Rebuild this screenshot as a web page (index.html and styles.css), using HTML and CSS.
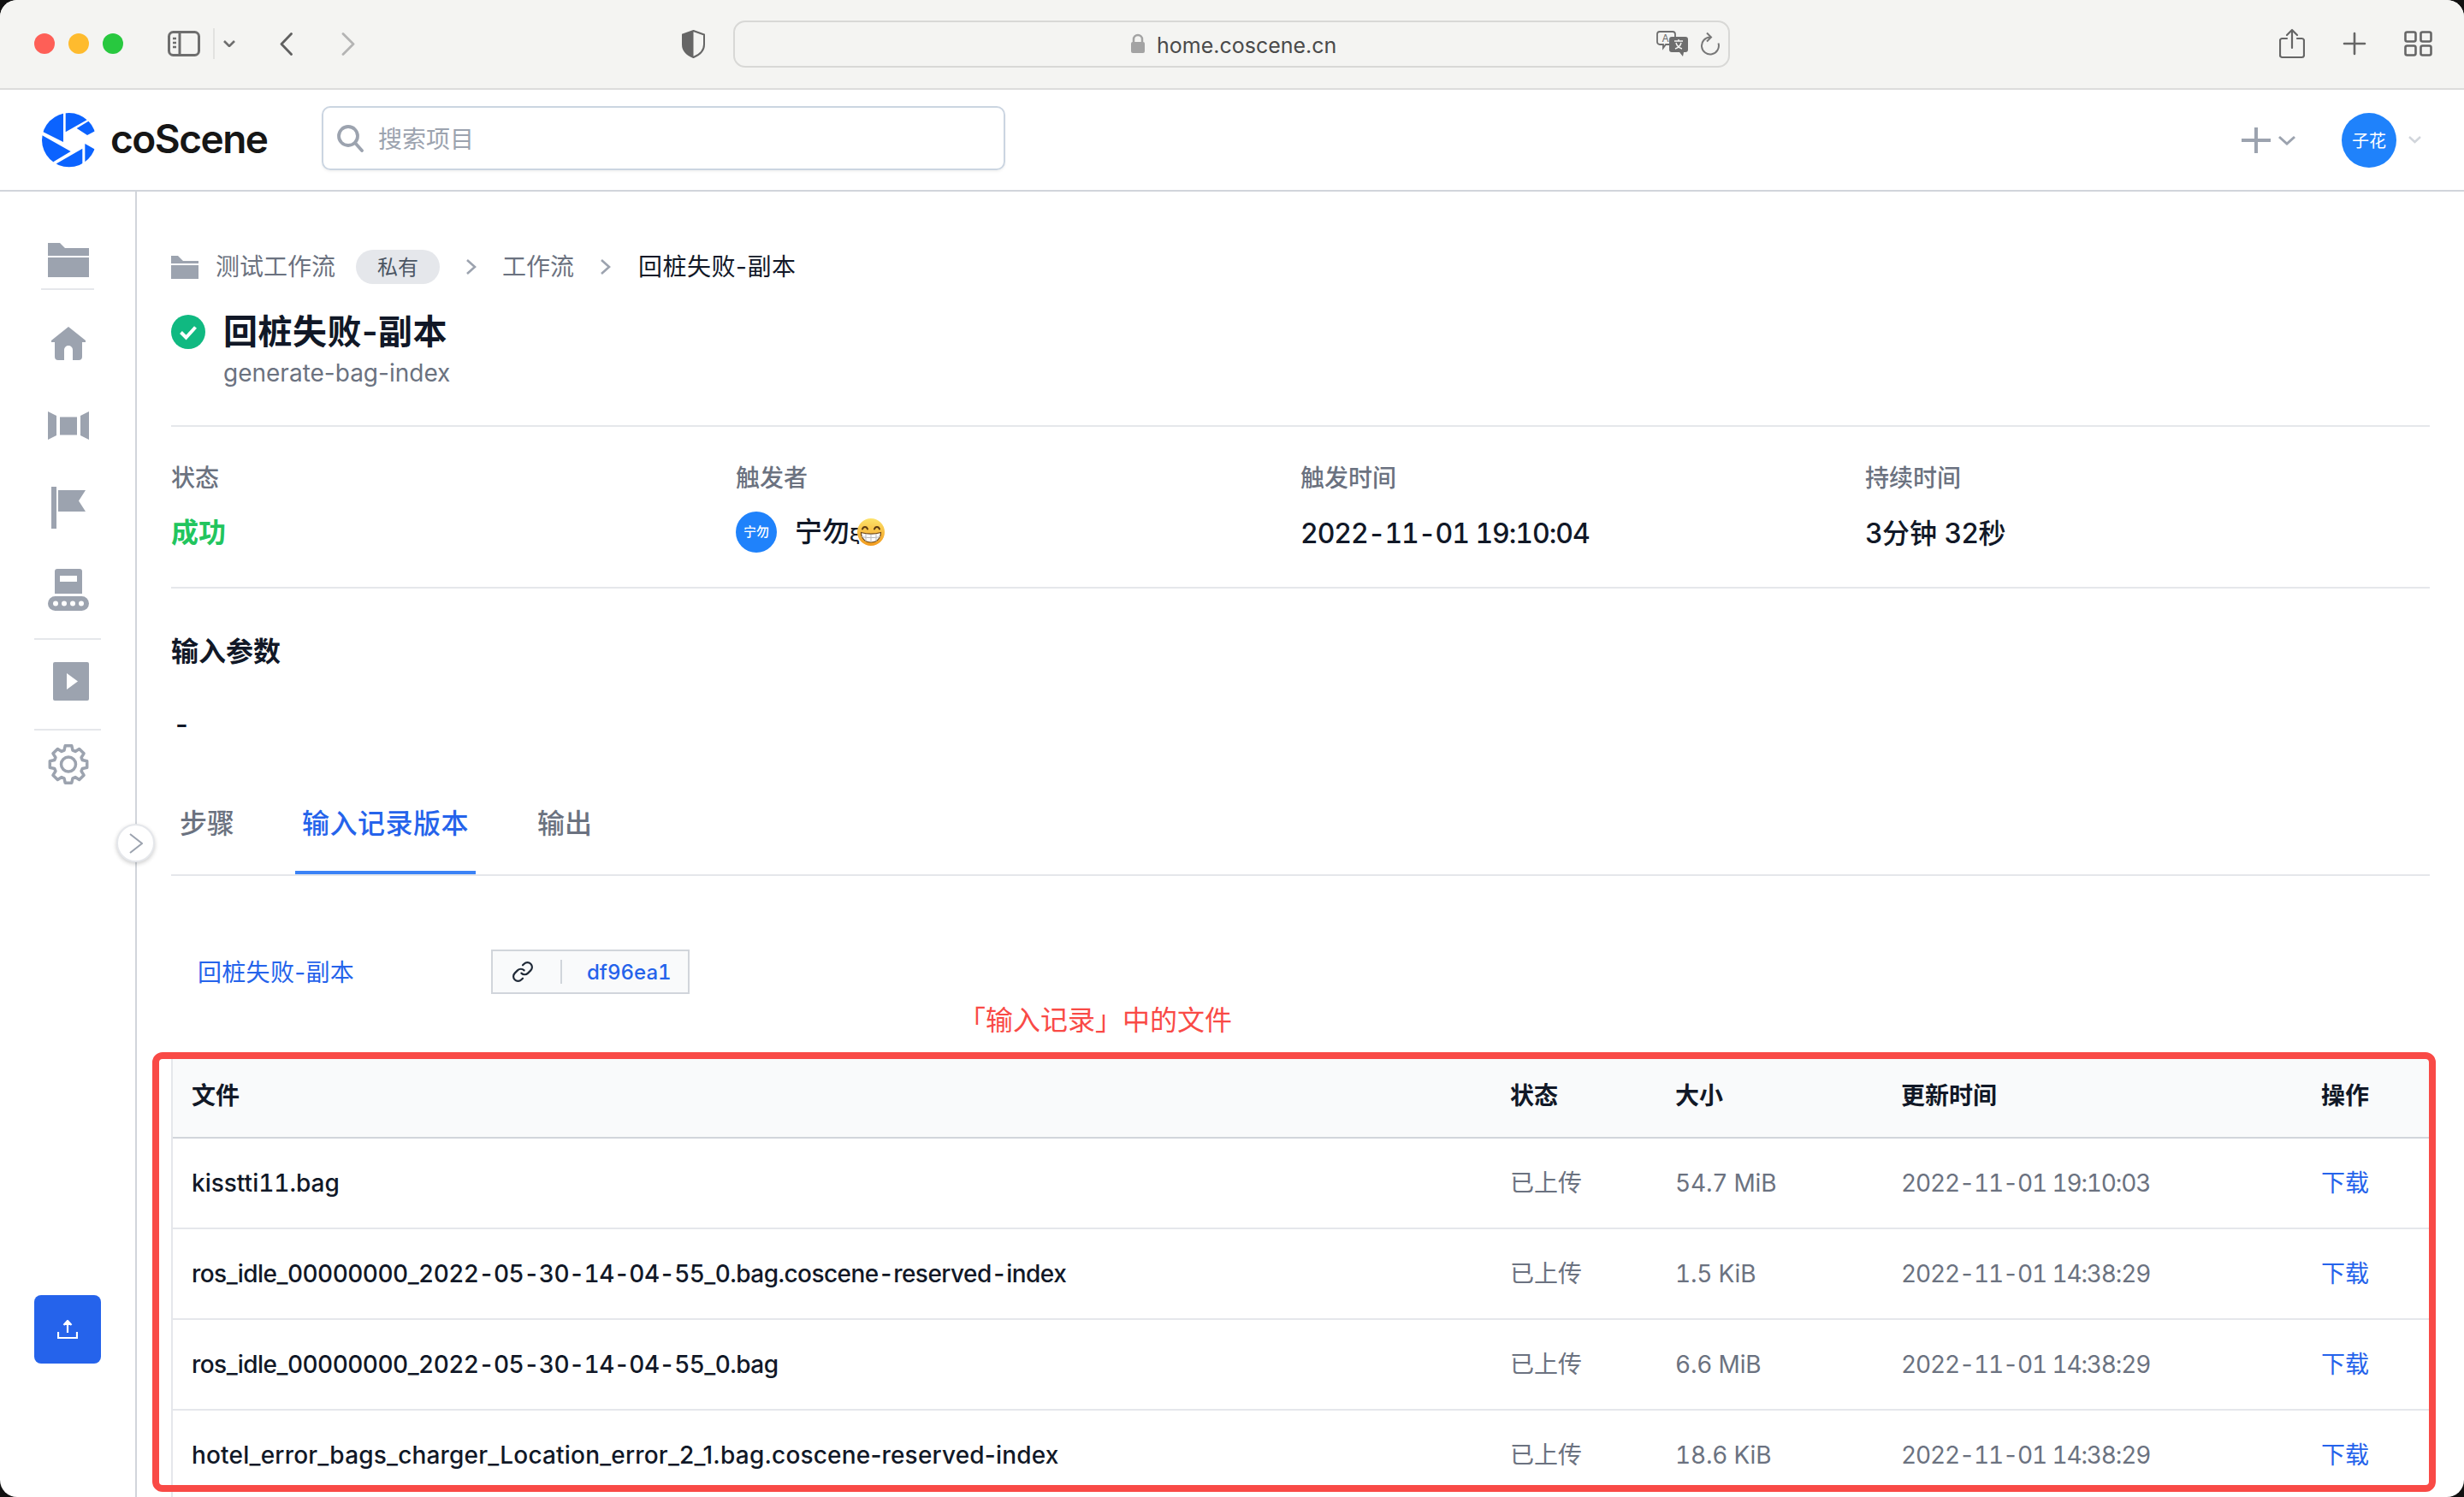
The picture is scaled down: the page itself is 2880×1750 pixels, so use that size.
FILE: index.html
```html
<!DOCTYPE html>
<html lang="en">
<head>
  <meta charset="UTF-8" />
  <title>回桩失败-副本 - coScene</title>
  <link rel="stylesheet" href="styles.css">
</head>
<body>
  <div class="window">
    <!-- browser chrome -->
    <div class="toolbar">
      <div class="lights">
        <span class="light light-red"></span>
        <span class="light light-yellow"></span>
        <span class="light light-green"></span>
      </div>
      <svg class="tb-sidebar" viewBox="0 0 38 30" fill="none" stroke="#6e6e6e" stroke-width="3">
        <rect x="1.5" y="1.5" width="35" height="27" rx="5"/>
        <path d="M14 2v26"/>
        <path d="M6 9h4M6 14h4M6 19h4" stroke-width="2.4"/>
      </svg>
      <span class="tb-sep"></span>
      <svg class="tb-chevron" viewBox="0 0 14 8" fill="none" stroke="#6e6e6e" stroke-width="2.6"><path d="M1 1l6 6 6-6"/></svg>
      <svg class="tb-back" viewBox="0 0 15 27" fill="none" stroke="#606060" stroke-width="2.8" stroke-linecap="round" stroke-linejoin="round"><path d="M13.5 1.5L2 13.5l11.5 12"/></svg>
      <svg class="tb-forward" viewBox="0 0 16 27" fill="none" stroke="#b4b4b4" stroke-width="2.8" stroke-linecap="round" stroke-linejoin="round"><path d="M2 1.5l12 12-12 12"/></svg>
      <svg class="tb-shield" viewBox="0 0 27 33">
        <path d="M13.5 1L26 5.5V17c0 7-5 12-12.500 15C6 29 1 24 1 17V5.500z" fill="#f4f4f2" stroke="#666" stroke-width="2"/>
        <path d="M13.500 1L1 5.500V17c0 7 5 12 12.500 15z" fill="#666"/>
      </svg>
      <div class="address">
        <svg class="lock" viewBox="0 0 18 24">
          <path d="M4 11V7a5 5 0 0110 0v4" fill="none" stroke="#a3a3a3" stroke-width="2.500"/>
          <rect x="1" y="10" width="16" height="13" rx="2" fill="#a3a3a3"/>
        </svg>
        <span class="url">home.coscene.cn</span>
        <div class="address-icons">
          <svg class="translate" viewBox="0 0 37 30">
            <path d="M4 1h15a3 3 0 013 3v9a3 3 0 01-3 3H11l-3 4v-4H4a3 3 0 01-3-3V4a3 3 0 013-3z" fill="#f4f4f2" stroke="#6e6e6e" stroke-width="1.800"/>
            <text x="6.500" y="12.500" class="translate-a">A</text>
            <path d="M18 7h16a3 3 0 013 3v12a3 3 0 01-3 3h-2l-1 5-4-5h-9a3 3 0 01-3-3V10a3 3 0 013-3z" fill="#6e6e6e"/>
            <path d="M21 12h10M26 10v2M23 14c1 4 4 6 7 7M29 14c-1 4-4 6-7 7" fill="none" stroke="#f4f4f2" stroke-width="1.500"/>
          </svg>
          <svg class="reload" viewBox="0 0 24 28" fill="none" stroke="#777" stroke-width="2">
            <path d="M12 6.500A10 10 0 1 0 21.500 13.500"/>
            <path d="M8 1.500l5 5-5 5"/>
          </svg>
        </div>
      </div>
      <svg class="tb-share" viewBox="0 0 30 36" fill="none" stroke="#666" stroke-width="2.200" stroke-linecap="round" stroke-linejoin="round">
        <path d="M9 12H3.500A2.500 2.500 0 001 14.500v17A2.500 2.500 0 003.500 34h23a2.500 2.500 0 002.500-2.500v-17a2.500 2.500 0 00-2.500-2.500H21"/>
        <path d="M15 23V2M9 8l6-6 6 6"/>
      </svg>
      <svg class="tb-plus" viewBox="0 0 28 28" fill="none" stroke="#666" stroke-width="2.600" stroke-linecap="round"><path d="M14 2v24M2 14h24"/></svg>
      <svg class="tb-grid" viewBox="0 0 33 30" fill="none" stroke="#666" stroke-width="2.600">
        <rect x="1.500" y="1.500" width="12" height="11" rx="2"/>
        <rect x="19.500" y="1.500" width="12" height="11" rx="2"/>
        <rect x="1.500" y="17.500" width="12" height="11" rx="2"/>
        <rect x="19.500" y="17.500" width="12" height="11" rx="2"/>
      </svg>
    </div>

    <!-- app header -->
    <header class="app-header">
      <div class="brand">
        <svg class="brand-mark" viewBox="0 0 228 228">
          <defs><clipPath id="logoClip"><circle cx="116" cy="113" r="95"/></clipPath></defs>
          <g clip-path="url(#logoClip)" fill="#0b63ff">
            <polygon points="96,0 96,120 24,84 0,84 0,0"/>
            <polygon points="104,0 200,0 181,41 104,85"/>
            <polygon points="143,72 184,47 230,40 230,70 180,96"/>
            <polygon points="172,126 230,159 230,230 172,230"/>
            <polygon points="163,143 163,230 60,230 72,196"/>
            <polygon points="0,84 122,153 62,189 40,230 0,230"/>
          </g>
        </svg>
        <span class="brand-name">coScene</span>
      </div>
      <label class="search">
        <svg class="search-icon" viewBox="0 0 31 32" fill="none" stroke="#9ca3af" stroke-width="3.800" stroke-linecap="round"><circle cx="13" cy="13" r="11"/><path d="M21 21l8 9"/></svg>
        <input class="search-input" type="text" placeholder="搜索项目" />
      </label>
      <div class="header-actions">
        <svg class="add-icon" viewBox="0 0 34 30" fill="none" stroke="#9ca3af" stroke-width="4"><path d="M17 0v30M0 15h34"/></svg>
        <svg class="add-chevron" viewBox="0 0 22 12" fill="none" stroke="#9ca3af" stroke-width="3"><path d="M2 2l9 8 9-8"/></svg>
        <span class="avatar avatar-lg">子花</span>
        <svg class="user-chevron" viewBox="0 0 15 9" fill="none" stroke="#d1d5db" stroke-width="2.400"><path d="M1 1l6.500 6L14 1"/></svg>
      </div>
    </header>

    <div class="app-body">
      <nav class="sidebar">
        <div class="nav-folder">
          <svg class="nav-icon folder-big" viewBox="0 0 48 40" fill="#9ca3af"><path d="M0 0h14l6 6h28v9H0z"/><path d="M0 17h48v23H0z"/></svg>
        </div>
        <div class="nav-rule nav-rule-short"></div>
        <div class="nav-group">
          <div class="nav-item">
            <svg class="nav-icon home" viewBox="0 0 40 39" fill="#9ca3af"><path d="M20 0l20 16v2h-4v17a4 4 0 01-4 4h-7V27a5 5 0 00-10 0v12H8a4 4 0 01-4-4V18H0v-2z"/></svg>
          </div>
          <div class="nav-item">
            <svg class="nav-icon camera" viewBox="0 0 48 33" fill="#9ca3af"><path d="M0 0l10 5v23L0 33z"/><path d="M14 6.500h20v21H14z"/><path d="M48 0l-10 5v23l10 5z"/></svg>
          </div>
          <div class="nav-item">
            <svg class="nav-icon flag" viewBox="0 0 40 49" fill="#9ca3af"><path d="M0 0h6v49H0z"/><path d="M8 4h32l-8 12.500L40 29H8z"/></svg>
          </div>
          <div class="nav-item">
            <svg class="nav-icon belt" viewBox="0 0 48 49">
              <path d="M11 0h26a3 3 0 013 3v26H8V3a3 3 0 013-3z" fill="#9ca3af"/>
              <path d="M14 8h20v7H14z" fill="#fff"/>
              <rect y="32" width="48" height="17" rx="8.500" fill="#9ca3af"/>
              <circle cx="9" cy="40.500" r="3" fill="#fff"/>
              <circle cx="19" cy="40.500" r="3" fill="#fff"/>
              <circle cx="29" cy="40.500" r="3" fill="#fff"/>
              <circle cx="39" cy="40.500" r="3" fill="#fff"/>
            </svg>
          </div>
        </div>
        <div class="nav-rule"></div>
        <div class="nav-item nav-item-play">
          <svg class="nav-icon play" viewBox="0 0 48 45">
            <rect x="6" width="42" height="45" rx="2" fill="#9ca3af"/>
            <path d="M22 13l13 9.500L22 32z" fill="#fff"/>
          </svg>
        </div>
        <div class="nav-rule"></div>
        <div class="nav-item nav-item-gear">
          <svg class="nav-icon gear" viewBox="-24 -24.500 48 49" fill="none" stroke="#9ca3af" stroke-width="3.500" stroke-linejoin="round">
            <polygon points="-5,-16.300 -3.800,-21.700 3.800,-21.700 5,-16.300 7.990,-15.060 12.660,-18.030 18.030,-12.660 15.060,-7.990 16.300,-5 21.700,-3.800 21.700,3.800 16.300,5 15.060,7.990 18.030,12.660 12.660,18.030 7.990,15.060 5,16.300 3.800,21.700 -3.800,21.700 -5,16.300 -7.990,15.060 -12.660,18.030 -18.030,12.660 -15.060,7.990 -16.300,5 -21.700,3.800 -21.700,-3.800 -16.300,-5 -15.060,-7.990 -18.030,-12.660 -12.660,-18.030 -7.990,-15.060"/>
            <circle r="8.500"/>
          </svg>
        </div>
        <button class="upload-button">
          <svg viewBox="0 0 24 22" fill="none" stroke="#fff" stroke-width="2.200"><path d="M12 15V2"/><path d="M7.500 6L12 1l4.500 5" fill="#fff"/><path d="M1 14v7h22v-7"/></svg>
        </button>
        <span class="nav-toggle">
          <svg viewBox="0 0 16 24" fill="none" stroke="#9ca3af" stroke-width="2"><path d="M1 1l14 11L1 23"/></svg>
        </span>
      </nav>

      <main class="main">
        <section class="run-header">
          <div class="crumbs">
            <svg class="crumb-folder" viewBox="0 0 32 27" fill="#9ca3af"><path d="M0 0h8l6 6h18v3H0z"/><path d="M0 11h32v16H0z"/></svg>
            <span class="crumb">测试工作流</span>
            <span class="pill">私有</span>
            <svg class="crumb-arrow" viewBox="0 0 13 20" fill="none" stroke="#9ca3af" stroke-width="2.600"><path d="M2 2l9 8-9 8"/></svg>
            <span class="crumb">工作流</span>
            <svg class="crumb-arrow" viewBox="0 0 13 20" fill="none" stroke="#9ca3af" stroke-width="2.600"><path d="M2 2l9 8-9 8"/></svg>
            <span class="crumb crumb-current">回桩失败-副本</span>
          </div>
          <div class="run-title">
            <svg class="status-icon" viewBox="0 0 40 40"><circle cx="20" cy="20" r="20" fill="#10b981"/><path d="M11.500 20.500l6 6 11-12" fill="none" stroke="#fff" stroke-width="4"/></svg>
            <h1>回桩失败-副本</h1>
          </div>
          <p class="run-sub">generate-bag-index</p>
        </section>

        <section class="run-info">
          <div class="info-col">
            <div class="info-label">状态</div>
            <div class="info-value info-success">成功</div>
          </div>
          <div class="info-col">
            <div class="info-label">触发者</div>
            <div class="info-value info-user">
              <span class="avatar avatar-sm">宁勿</span>
              <span class="user-name">宁勿<span class="user-xi">ξ</span></span>
              <svg class="emoji" viewBox="0 0 32 32">
                <defs><linearGradient id="emojiFace" x1="0" y1="0" x2="0" y2="1"><stop offset="0" stop-color="#fde36a"/><stop offset="1" stop-color="#f29a1d"/></linearGradient></defs>
                <circle cx="16" cy="16" r="16" fill="url(#emojiFace)"/>
                <path d="M6 12.500c1-3.500 5-3.500 6 0M20 12.500c1-3.500 5-3.500 6 0" fill="none" stroke="#5c3a12" stroke-width="2" stroke-linecap="round"/>
                <path d="M4.500 16.500c7 2 16 2 23 0 0 7-5 11.500-11.500 11.500S4.500 23.500 4.500 16.500z" fill="#fff" stroke="#6b4515" stroke-width="1.200"/>
                <path d="M5 21.500c7 1.500 15 1.500 22 0M10 18v9M16 18.500v9.500M22 18v9" fill="none" stroke="#b9b9b9" stroke-width="1"/>
              </svg>
            </div>
          </div>
          <div class="info-col">
            <div class="info-label">触发时间</div>
            <div class="info-value info-time">2022-11-01 19:10:04</div>
          </div>
          <div class="info-col">
            <div class="info-label">持续时间</div>
            <div class="info-value">3分钟 32秒</div>
          </div>
        </section>

        <h2 class="params-title">输入参数</h2>
        <p class="params-value">-</p>

        <div class="tabs">
          <span class="tab tab-first">步骤</span>
          <span class="tab tab-active">输入记录版本</span>
          <span class="tab">输出</span>
        </div>

        <div class="version-row">
          <a class="version-name">回桩失败-副本</a>
          <span class="version-hash">
            <svg class="link-icon" viewBox="0 0 24 24" fill="none" stroke="#1f2937" stroke-width="2" stroke-linecap="round"><path d="M10.500 13.500a5 5 0 007.100 0l3-3a5 5 0 00-7.100-7.100l-1.500 1.500"/><path d="M13.500 10.500a5 5 0 00-7.100 0l-3 3a5 5 0 007.100 7.100l1.500-1.500"/></svg>
            <span class="hash-sep"></span>
            <span class="hash-text">df96ea1</span>
          </span>
        </div>

        <p class="annotation">「输入记录」中的文件</p>

        <div class="files">
          <div class="files-frame"></div>
          <table class="files-table">
            <colgroup>
              <col class="col-file"><col class="col-state"><col class="col-size"><col class="col-time"><col>
            </colgroup>
            <thead>
              <tr><th>文件</th><th>状态</th><th>大小</th><th>更新时间</th><th>操作</th></tr>
            </thead>
            <tbody>
              <tr>
                <td class="file-name file-num">kisstti11.bag</td><td class="cjk-cell">已上传</td><td class="size">54.7 MiB</td><td class="time">2022-11-01 19:10:03</td><td class="cjk-cell"><a class="download">下载</a></td>
              </tr>
              <tr>
                <td class="file-name file-dated">ros_idle_00000000_2022-05-30-14-04-55_0.bag.coscene-reserved-index</td><td class="cjk-cell">已上传</td><td class="size">1.5 KiB</td><td class="time">2022-11-01 14:38:29</td><td class="cjk-cell"><a class="download">下载</a></td>
              </tr>
              <tr>
                <td class="file-name file-dated">ros_idle_00000000_2022-05-30-14-04-55_0.bag</td><td class="cjk-cell">已上传</td><td class="size">6.6 MiB</td><td class="time">2022-11-01 14:38:29</td><td class="cjk-cell"><a class="download">下载</a></td>
              </tr>
              <tr>
                <td class="file-name">hotel_error_bags_charger_Location_error_2_1.bag.coscene-reserved-index</td><td class="cjk-cell">已上传</td><td class="size">18.6 KiB</td><td class="time">2022-11-01 14:38:29</td><td class="cjk-cell"><a class="download">下载</a></td>
              </tr>
            </tbody>
          </table>
        </div>
      </main>
    </div>
  </div>
</body>
</html>
```

FILE: styles.css
```css
* { margin: 0; padding: 0; box-sizing: border-box; }

:root {
  --gray-200: #e5e7eb;
  --gray-300: #d1d5db;
  --gray-400: #9ca3af;
  --gray-500: #6b7280;
  --gray-900: #111827;
  --blue-600: #2563eb;
}

html, body { height: 100%; }

body {
  background: #111;
  font-family: Inter, "Noto Sans CJK SC", sans-serif;
  font-size: 28px;
  color: var(--gray-900);
  overflow: hidden;
}

svg { display: block; flex-shrink: 0; }

.window {
  height: 1750px;
  background: white;
  border-radius: 20px;
  overflow: hidden;
  display: flex;
  flex-direction: column;
}

/* browser chrome */
.toolbar {
  height: 105px;
  flex-shrink: 0;
  padding: 0 0 1px 40px;
  background: #f4f4f2;
  border-bottom: 2px solid #dcdcdc;
  display: flex;
  align-items: center;
}

.lights { display: flex; gap: 16px; }
.light { width: 24px; height: 24px; border-radius: 50%; }
.light-red { background: #fe5f57; }
.light-yellow { background: #febb2e; }
.light-green { background: #28c83f; }

.tb-sidebar { width: 38px; height: 30px; margin-left: 52px; }
.tb-sep { width: 2px; height: 36px; margin-left: 15px; background: #e2e2e0; }
.tb-chevron { width: 14px; height: 8px; margin-left: 10px; }
.tb-back { width: 15px; height: 27px; margin-left: 52px; }
.tb-forward { width: 16px; height: 27px; margin-left: 57px; }
.tb-shield { width: 27px; height: 33px; margin-left: 382px; }

.address {
  width: 1165px;
  height: 55px;
  margin-left: 33px;
  padding: 0 9px 0 462px;
  border: 2px solid #d8d8d6;
  border-radius: 14px;
  display: flex;
  align-items: center;
}

.lock { width: 18px; height: 24px; }
.url { margin-left: 13px; padding-top: 3px; font-size: 25px; color: #4a4a4a; }
.address-icons { margin-left: auto; display: flex; align-items: center; gap: 14px; }
.translate { width: 37px; height: 30px; }
.translate-a { font-size: 12px; fill: #6e6e6e; }
.reload { width: 24px; height: 28px; }

.tb-share { width: 30px; height: 36px; margin-left: 642px; }
.tb-plus { width: 28px; height: 28px; margin-left: 44px; }
.tb-grid { width: 33px; height: 30px; margin-left: 44px; }

/* app header */
.app-header {
  height: 119px;
  flex-shrink: 0;
  padding: 0 50px 0 40px;
  border-bottom: 2px solid var(--gray-300);
  display: flex;
  align-items: center;
}

.brand { width: 336px; flex-shrink: 0; display: flex; align-items: center; }
.brand-mark { width: 76px; height: 76px; margin-left: 2px; }
.brand-name {
  margin-left: 11px;
  margin-bottom: 3px;
  font-size: 46px;
  font-weight: 600;
  letter-spacing: -1.5px;
  color: #161616;
}

.search {
  width: 799px;
  height: 75px;
  margin-bottom: 4px;
  padding-left: 16px;
  border: 2px solid #cbd5e1;
  border-radius: 10px;
  box-shadow: 0 2px 3px rgba(0, 0, 0, 0.05);
  display: flex;
  align-items: center;
  gap: 17px;
}

.search-icon { width: 31px; height: 32px; }
.search-input {
  flex: 1;
  padding-top: 2px;
  border: none;
  outline: none;
  font: inherit;
  background: transparent;
}
.search-input::placeholder { color: var(--gray-400); opacity: 1; }

.header-actions { margin-left: auto; display: flex; align-items: center; }
.add-icon { width: 34px; height: 30px; }
.add-chevron { width: 22px; height: 12px; margin-left: 8px; }
.user-chevron { width: 15px; height: 9px; margin-left: 14px; }

.avatar {
  border-radius: 50%;
  background: #1f82fb;
  color: white;
  display: flex;
  align-items: center;
  justify-content: center;
  flex-shrink: 0;
}
.avatar-lg { width: 64px; height: 64px; margin-left: 53px; font-size: 20px; }
.avatar-sm { width: 48px; height: 48px; font-size: 15px; }

.app-body { flex: 1; min-height: 0; display: flex; }

/* sidebar */
.sidebar {
  width: 160px;
  flex-shrink: 0;
  padding: 47px 0 156px;
  border-right: 2px solid var(--gray-300);
  position: relative;
  display: flex;
  flex-direction: column;
  align-items: center;
}

.nav-folder { height: 66px; }
.nav-group { margin-top: 14px; margin-bottom: 9px; }
.nav-item { height: 96px; display: flex; align-items: center; justify-content: center; }
.nav-item-play { margin-bottom: 8px; }
.nav-item-gear { height: 78px; }
.nav-icon { margin-left: 2px; }

.nav-rule { width: 78px; height: 2px; flex-shrink: 0; background: var(--gray-200); }
.nav-rule-short { width: 62px; }

.folder-big { width: 48px; height: 40px; margin-top: 13px; }
.home { width: 40px; height: 39px; }
.camera { width: 48px; height: 33px; }
.flag { width: 40px; height: 49px; }
.belt { width: 48px; height: 49px; }
.play { width: 48px; height: 45px; }
.gear { width: 48px; height: 49px; }

.upload-button {
  width: 78px;
  height: 80px;
  margin-top: auto;
  background: var(--blue-600);
  border: none;
  border-radius: 8px;
  display: flex;
  align-items: center;
  justify-content: center;
}
.upload-button svg { width: 24px; height: 22px; }

.nav-toggle {
  position: absolute;
  left: 136px;
  top: 739px;
  width: 45px;
  height: 45px;
  border-radius: 50%;
  background: white;
  border: 2px solid #e5e7eb;
  box-shadow: 0 2px 5px rgba(0, 0, 0, 0.2);
  display: flex;
  align-items: center;
  justify-content: center;
}
.nav-toggle svg { width: 16px; height: 24px; }

/* main column */
.main { flex: 1; min-width: 0; padding: 68px 40px 0; }

.run-header { padding-bottom: 41px; border-bottom: 2px solid var(--gray-200); }

.crumbs { height: 40px; display: flex; align-items: center; }
.crumb-folder { width: 32px; height: 27px; margin-right: 20px; }
.crumb { color: var(--gray-500); line-height: 40px; }
.crumb-current { margin-left: 2px; color: var(--gray-900); letter-spacing: 0.5px; }
.pill {
  width: 98px;
  height: 40px;
  margin-left: 24px;
  padding-bottom: 3px;
  border-radius: 20px;
  background: var(--gray-200);
  color: #4b5563;
  font-size: 24px;
  display: flex;
  align-items: center;
  justify-content: center;
}
.crumb-arrow { width: 13px; height: 20px; margin: 0 30px; }
.pill + .crumb-arrow { margin-left: 30px; }

.run-title { height: 56px; margin-top: 28px; display: flex; align-items: center; gap: 21px; }
.status-icon { width: 40px; height: 40px; }
.run-title h1 { font-size: 40px; font-weight: 600; line-height: 56px; letter-spacing: 0.5px; }
.run-sub { padding-left: 61px; color: var(--gray-500); line-height: 40px; }

.run-info {
  padding: 40px 0 38px;
  border-bottom: 2px solid var(--gray-200);
  display: grid;
  grid-template-columns: repeat(4, 1fr);
}
.info-label { color: var(--gray-500); font-weight: 500; line-height: 40px; }
.info-value {
  height: 48px;
  margin-top: 21px;
  font-size: 32px;
  font-weight: 500;
  line-height: 48px;
}
.info-success { color: #22c55e; font-weight: 600; line-height: 46px; }
.info-time { font-variant-numeric: tabular-nums; letter-spacing: -1.05px; }
.info-user { margin-top: 19px; margin-bottom: 2px; display: flex; align-items: center; }
.user-name { margin-left: 21px; padding-top: 2px; }
.user-xi { font-size: 22px; }
.emoji { width: 32px; height: 32px; margin-left: -3px; }

.params-title { margin-top: 52px; font-size: 32px; font-weight: 600; line-height: 44px; }
.params-value { margin-top: 41px; padding-left: 5px; font-size: 32px; font-weight: 500; line-height: 44px; }

.tabs { margin-top: 72px; border-bottom: 2px solid var(--gray-200); display: flex; gap: 62px; }
.tab {
  padding: 0 10px 33px;
  border-bottom: 4px solid transparent;
  color: var(--gray-500);
  font-size: 32px;
  font-weight: 500;
  line-height: 44px;
}
.tab-first { padding-right: 9px; }
.tab-active {
  padding-left: 8px;
  padding-right: 8px;
  color: var(--blue-600);
  border-bottom-color: #3b82f6;
  letter-spacing: 0.5px;
}

.version-row { margin-top: 86px; padding-left: 31px; display: flex; align-items: center; }
.version-name { width: 343px; padding-bottom: 2px; color: var(--blue-600); letter-spacing: 0.3px; }
.version-hash {
  width: 232px;
  height: 52px;
  padding-left: 22px;
  border: 2px solid var(--gray-300);
  background: #f9fafb;
  display: flex;
  align-items: center;
}
.link-icon { width: 26px; height: 26px; }
.hash-sep { width: 2px; height: 28px; margin-left: 31px; background: var(--gray-300); }
.hash-text {
  margin-left: 29px;
  color: var(--blue-600);
  font-size: 24px;
  font-weight: 500;
  font-variant-numeric: tabular-nums;
}

.annotation {
  margin-top: 11px;
  padding-left: 920px;
  color: #f94a46;
  font-size: 32px;
  line-height: 40px;
}

/* files table */
.files { margin-top: 25px; position: relative; border-left: 2px solid var(--gray-200); }

.files-frame {
  position: absolute;
  left: -24px;
  top: -8px;
  right: -7px;
  height: 514px;
  border: 8px solid #f94a46;
  border-radius: 12px;
  pointer-events: none;
}

.files-table { width: 100%; table-layout: fixed; border-collapse: separate; border-spacing: 0; }
.col-file { width: 1563px; }
.col-state { width: 193px; }
.col-size { width: 264px; }
.col-time { width: 491px; }

.files-table th {
  height: 93px;
  padding-bottom: 10px;
  background: #f9fafb;
  border-bottom: 2px solid var(--gray-300);
  font-weight: 600;
  text-align: left;
}
.files-table td {
  height: 106px;
  border-bottom: 2px solid var(--gray-200);
  color: var(--gray-500);
}
.files-table th:first-child,
.files-table td:first-child { padding-left: 22px; }
.files-table td.file-name {
  color: var(--gray-900);
  font-weight: 500;
  letter-spacing: 0.18px;
}
.files-table td.file-num { font-variant-numeric: tabular-nums; letter-spacing: 0; }
.files-table td.file-dated { font-variant-numeric: tabular-nums; letter-spacing: -0.55px; }
.files-table td.size { font-variant-numeric: tabular-nums; letter-spacing: -0.2px; }
.files-table td.time { font-variant-numeric: tabular-nums; letter-spacing: -1.15px; }
.files-table td.cjk-cell { padding-bottom: 4px; }
.download { color: var(--blue-600); }
```
